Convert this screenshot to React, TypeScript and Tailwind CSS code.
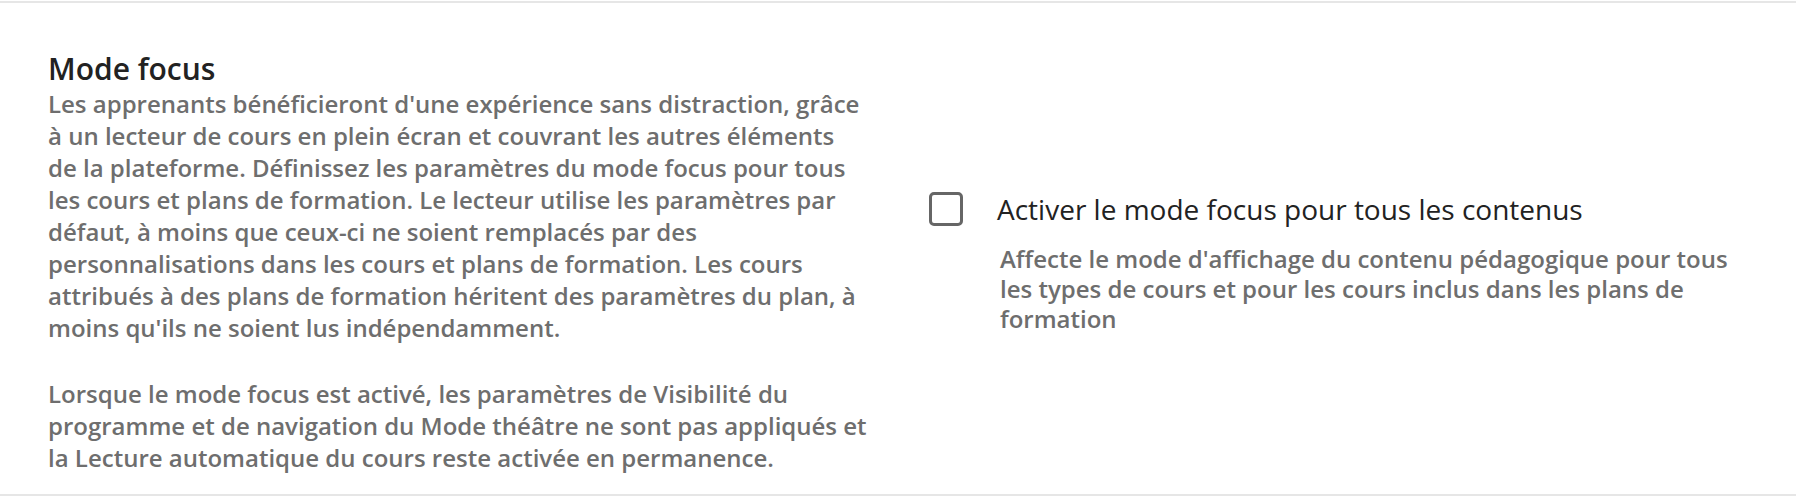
import React from "react";

const para1 = [
  "Les apprenants bénéficieront d'une expérience sans distraction, grâce",
  "à un lecteur de cours en plein écran et couvrant les autres éléments",
  "de la plateforme. Définissez les paramètres du mode focus pour tous",
  "les cours et plans de formation. Le lecteur utilise les paramètres par",
  "défaut, à moins que ceux-ci ne soient remplacés par des",
  "personnalisations dans les cours et plans de formation. Les cours",
  "attribués à des plans de formation héritent des paramètres du plan, à",
  "moins qu'ils ne soient lus indépendamment.",
];

const para2 = [
  "Lorsque le mode focus est activé, les paramètres de Visibilité du",
  "programme et de navigation du Mode théâtre ne sont pas appliqués et",
  "la Lecture automatique du cours reste activée en permanence.",
];

export default function App() {
  return (
    <div
      className="w-[1796px] h-[502px] bg-white pt-px"
      style={{ fontFamily: '"Open Sans", "Noto Sans", sans-serif' }}
    >
      <div className="h-[495px] border-t-2 border-b-2 border-[#e6e6e6] flex items-start pt-[47px] pl-[48px]">
        <div className="flex items-center">
          <div className="w-[822px] shrink-0">
            <h2 className="text-[30px] leading-[38px] font-semibold text-[#222222]">Mode focus</h2>
            <p className="text-[24px] leading-[32px] font-semibold text-[#6e6e6e]">
              {para1.map((l, i) => (
                <span key={i} className="block whitespace-nowrap">
                  {l}
                </span>
              ))}
            </p>
            <p className="mt-[34px] text-[24px] leading-[32px] font-semibold text-[#6e6e6e]">
              {para2.map((l, i) => (
                <span key={i} className="block whitespace-nowrap">
                  {l}
                </span>
              ))}
            </p>
          </div>
          <div className="ml-[59px] flex flex-col">
            <label className="flex items-center">
              <span className="w-[34px] h-[34px] rounded-[5px] border-[3px] border-[#666666] bg-white shrink-0" />
              <span className="ml-[34px] text-[28px] leading-[38px] text-[#222222]">
                Activer le mode focus pour tous les contenus
              </span>
            </label>
            <p className="mt-[16px] ml-[71px] w-[760px] text-[24px] leading-[30px] font-semibold text-[#6e6e6e]">
              Affecte le mode d'affichage du contenu pédagogique pour tous les types de cours et pour les cours inclus dans les plans de formation
            </p>
          </div>
        </div>
      </div>
    </div>
  );
}
